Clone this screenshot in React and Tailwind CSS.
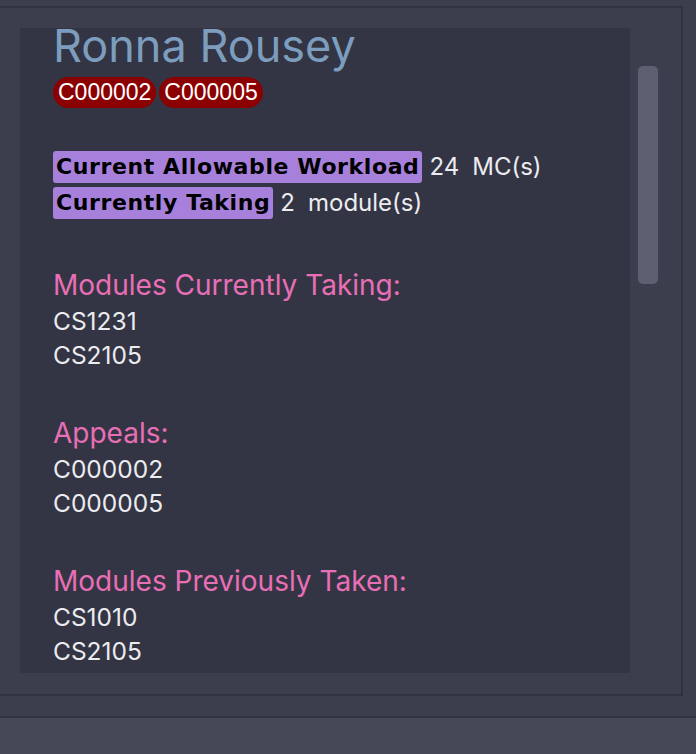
const sections = [
  { title: "Modules Currently Taking:", items: ["CS1231", "CS2105"] },
  { title: "Appeals:", items: ["C000002", "C000005"] },
  { title: "Modules Previously Taken:", items: ["CS1010", "CS2105"] },
];

function Tag({ children }) {
  return (
    <span className="h-[31px] rounded-full bg-[#8b0000] px-[5px] text-[23px] leading-[31px] text-white [font-family:'Liberation_Sans',Arial,sans-serif]">
      {children}
    </span>
  );
}

function Label({ children }) {
  return (
    <span className="h-[32px] rounded-[3px] bg-[#a780dc] px-[3px] text-[22px] font-bold leading-[32px] tracking-[0.6px] text-black [font-family:'DejaVu_Sans',sans-serif]">
      {children}
    </span>
  );
}

export default function App() {
  return (
    <div className="flex h-[754px] w-[696px] flex-col overflow-hidden bg-[#3c3e4d] [font-family:Inter,'Noto_Sans',sans-serif]">
      <div className="h-[6px] shrink-0" />
      <div className="flex h-[690px] w-[683px] shrink-0 border-y-2 border-r-2 border-[#30323f] pl-[20px] pt-[20px] pb-[21px]">
        <div className="h-full w-[610px] overflow-hidden bg-[#333544] pl-[33px]">
          <h1 className="text-[45px] leading-[36px] text-[#7c9dbd]">Ronna Rousey</h1>
          <div className="mt-[13px] flex gap-[3px]">
            <Tag>C000002</Tag>
            <Tag>C000005</Tag>
          </div>

          <div className="mt-[43px] flex flex-col gap-[4px] text-[24px] leading-[32px] text-[#ececf0]">
            <div className="flex h-[32px] items-center">
              <Label>Current Allowable Workload</Label>
              <span className="ml-[7px]">24</span>
              <span className="ml-[13px]">MC(s)</span>
            </div>
            <div className="flex h-[32px] items-center">
              <Label>Currently Taking</Label>
              <span className="ml-[7px]">2</span>
              <span className="ml-[13px]">module(s)</span>
            </div>
          </div>

          {sections.map((s, i) => (
            <div key={s.title} className={i === 0 ? "mt-[47px]" : "mt-[42px]"}>
              <h2 className="text-[28px] leading-[38px] text-[#e86fb5]">{s.title}</h2>
              {s.items.map((it) => (
                <p key={it} className="text-[24.5px] leading-[34px] text-[#ececf0]">{it}</p>
              ))}
            </div>
          ))}
        </div>
        <div className="flex w-[50px] justify-center pt-[38px]">
          <div className="ml-[-14px] h-[218px] w-[20px] rounded-[5px] bg-[#5e6072]" />
        </div>
      </div>
      <div className="h-[20px] shrink-0" />
      <div className="flex-1 border-t-2 border-[#30323f] bg-[#464858]" />
    </div>
  );
}
